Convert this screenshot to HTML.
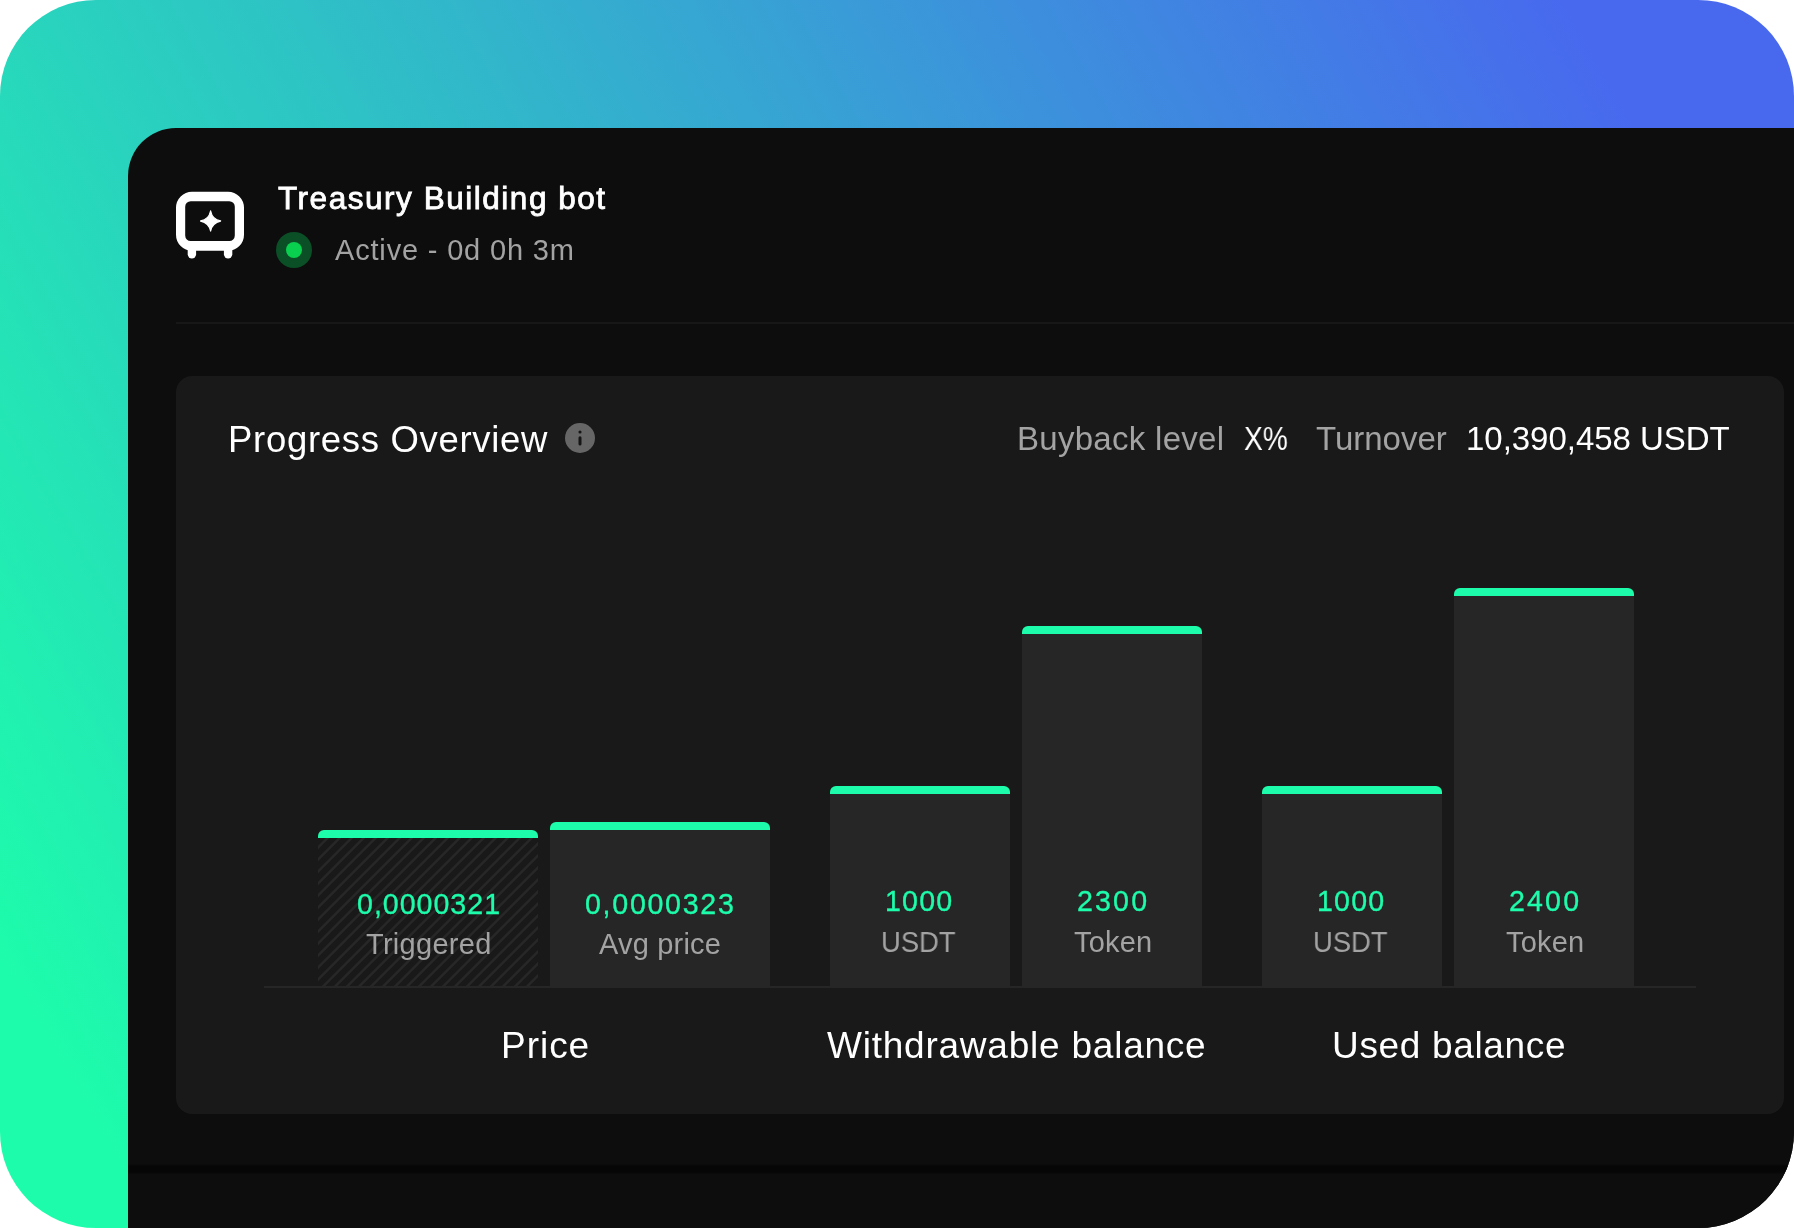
<!DOCTYPE html>
<html lang="en">
<head>
<meta charset="utf-8">
<title>Treasury Building bot</title>
<style>
html,body{margin:0;padding:0;background:#ffffff;}
body{width:1794px;height:1228px;overflow:hidden;position:relative;font-family:"Liberation Sans",sans-serif;}
.bg{position:absolute;left:0;top:0;width:1794px;height:1228px;border-radius:96px;overflow:hidden;
  background:linear-gradient(#0d0d0d,#0d0d0d) 128px 180px/1666px 1048px no-repeat,linear-gradient(#0d0d0d,#0d0d0d) 180px 128px/1614px 1100px no-repeat,linear-gradient(60.3deg,#1dfcab 6.1%,#4869ee 90.8%);}
.panel{position:absolute;left:128px;top:128px;width:1666px;height:1100px;background:#0d0d0d;border-top-left-radius:48px;overflow:hidden;}
.abs{position:absolute;}
.t{position:absolute;white-space:nowrap;line-height:1;will-change:transform;font-family:"Liberation Sans",sans-serif;}
.divider{left:176px;top:322px;width:1618px;height:2px;background:#171717;}
.card{left:176px;top:376px;width:1608px;height:738px;border-radius:16px;background:#191919;}
.axis{left:264px;top:986px;width:1432px;height:2px;background:#262626;}
.bar{position:absolute;background:#262626;}
.cap{position:absolute;height:8px;background:#1dfcab;border-radius:6px 6px 0 0;}
.hatch{background:repeating-linear-gradient(135deg,#191919 0px,#191919 5.1px,#272727 6.0px,#272727 7.6px,#191919 8.485px);}
.band{left:128px;top:1164px;width:1666px;height:11px;background:linear-gradient(to bottom,#0d0d0d 0px,#060606 2.2px,#060606 8px,#0d0d0d 10.7px);}
.dot-o{left:276px;top:232px;width:36px;height:36px;border-radius:50%;background:#0b4f27;}
.dot-i{left:286px;top:242px;width:16px;height:16px;border-radius:50%;background:#09d04f;}
</style>
</head>
<body>
<div class="bg">
  <div class="panel"></div>
  <div class="abs band"></div>
  <div class="abs divider"></div>
  <div class="abs card"></div>

  <!-- bot icon -->
  <svg class="abs" style="left:170px;top:186px" width="80" height="80" viewBox="170 186 80 80">
    <path fill="#ffffff" fill-rule="evenodd" d="M192 191.7 H228 A16 16 0 0 1 244 207.7 V234.8 A16 16 0 0 1 228 250.8 H192 A16 16 0 0 1 176 234.8 V207.7 A16 16 0 0 1 192 191.7 Z M190.7 201.2 A5.5 5.5 0 0 0 185.2 206.7 V235.5 A5.5 5.5 0 0 0 190.7 241 H229.3 A5.5 5.5 0 0 0 234.8 235.5 V206.7 A5.5 5.5 0 0 0 229.3 201.2 Z"/>
    <rect x="187.7" y="244" width="8.4" height="14.5" rx="4.2" fill="#ffffff"/>
    <rect x="223.9" y="244" width="8.4" height="14.5" rx="4.2" fill="#ffffff"/>
    <path d="M210.6 211 Q212.2 219.4 220.6 221 Q212.2 222.6 210.6 231 Q209 222.6 200.6 221 Q209 219.4 210.6 211 Z" fill="#ffffff" stroke="#ffffff" stroke-width="1.3" stroke-linejoin="round"/>
  </svg>

  <div class="abs dot-o"></div>
  <div class="abs dot-i"></div>

  <!-- info icon -->
  <svg class="abs" style="left:565px;top:423px" width="30" height="30" viewBox="0 0 30 30">
    <circle cx="15" cy="15" r="15" fill="#666666"/>
    <circle cx="15" cy="9" r="1.55" fill="#151515"/>
    <rect x="13.5" y="13.2" width="3" height="9.4" rx="1.5" fill="#151515"/>
  </svg>

  <!-- bars -->
  <div class="bar hatch" style="left:318px;top:838px;width:220px;height:148px"></div>
  <div class="cap" style="left:318px;top:830px;width:220px"></div>

  <div class="bar" style="left:550px;top:830px;width:220px;height:156px"></div>
  <div class="cap" style="left:550px;top:822px;width:220px"></div>

  <div class="bar" style="left:830px;top:794px;width:180px;height:192px"></div>
  <div class="cap" style="left:830px;top:786px;width:180px"></div>

  <div class="bar" style="left:1022px;top:634px;width:180px;height:352px"></div>
  <div class="cap" style="left:1022px;top:626px;width:180px"></div>

  <div class="bar" style="left:1262px;top:794px;width:180px;height:192px"></div>
  <div class="cap" style="left:1262px;top:786px;width:180px"></div>

  <div class="bar" style="left:1454px;top:596px;width:180px;height:390px"></div>
  <div class="cap" style="left:1454px;top:588px;width:180px"></div>

  <div class="abs axis"></div>

<span class="t" style="left:277.58px;top:183px;font-size:31.5px;color:#ffffff;letter-spacing:1.531px;-webkit-text-stroke:0.85px #ffffff;">Treasury Building bot</span>
<span class="t" style="left:335.30px;top:236px;font-size:29px;color:#a3a3a3;letter-spacing:0.825px;">Active - 0d 0h 3m</span>
<span class="t" style="left:227.50px;top:422px;font-size:36.5px;color:#ffffff;letter-spacing:0.697px;">Progress Overview</span>
<span class="t" style="left:1016.70px;top:422px;font-size:33px;color:#a3a3a3;letter-spacing:0.285px;">Buyback level</span>
<span class="t" style="left:1244.10px;top:422px;font-size:33px;color:#ffffff;transform:scaleX(0.8528);transform-origin:0 0;">X%</span>
<span class="t" style="left:1315.90px;top:422px;font-size:33px;color:#a3a3a3;letter-spacing:-0.005px;">Turnover</span>
<span class="t" style="left:1465.90px;top:422px;font-size:33px;color:#ffffff;letter-spacing:-0.029px;">10,390,458 USDT</span>
<span class="t" style="left:357.18px;top:890px;font-size:28.6px;color:#1dfcab;letter-spacing:0.985px;-webkit-text-stroke:0.35px #1dfcab;">0,0000321</span>
<span class="t" style="left:366.30px;top:930px;font-size:29px;color:#a3a3a3;letter-spacing:0.286px;">Triggered</span>
<span class="t" style="left:585.48px;top:890px;font-size:28.6px;color:#1dfcab;letter-spacing:1.710px;-webkit-text-stroke:0.35px #1dfcab;">0,0000323</span>
<span class="t" style="left:599.10px;top:930px;font-size:29px;color:#a3a3a3;letter-spacing:0.196px;">Avg price</span>
<span class="t" style="left:884.88px;top:887px;font-size:28.6px;color:#1dfcab;letter-spacing:1.178px;-webkit-text-stroke:0.35px #1dfcab;">1000</span>
<span class="t" style="left:881.21px;top:928px;font-size:29px;color:#a3a3a3;transform:scaleX(0.9440);transform-origin:0 0;">USDT</span>
<span class="t" style="left:1077.18px;top:887px;font-size:28.6px;color:#1dfcab;letter-spacing:2.144px;-webkit-text-stroke:0.35px #1dfcab;">2300</span>
<span class="t" style="left:1073.50px;top:928px;font-size:29px;color:#a3a3a3;letter-spacing:0.186px;">Token</span>
<span class="t" style="left:1316.88px;top:887px;font-size:28.6px;color:#1dfcab;letter-spacing:1.178px;-webkit-text-stroke:0.35px #1dfcab;">1000</span>
<span class="t" style="left:1313.21px;top:928px;font-size:29px;color:#a3a3a3;transform:scaleX(0.9440);transform-origin:0 0;">USDT</span>
<span class="t" style="left:1509.18px;top:887px;font-size:28.6px;color:#1dfcab;letter-spacing:2.144px;-webkit-text-stroke:0.35px #1dfcab;">2400</span>
<span class="t" style="left:1505.50px;top:928px;font-size:29px;color:#a3a3a3;letter-spacing:0.186px;">Token</span>
<span class="t" style="left:500.50px;top:1027px;font-size:37px;color:#ffffff;letter-spacing:0.970px;">Price</span>
<span class="t" style="left:827.30px;top:1027px;font-size:37px;color:#ffffff;letter-spacing:0.771px;">Withdrawable balance</span>
<span class="t" style="left:1332.20px;top:1027px;font-size:37px;color:#ffffff;letter-spacing:0.665px;">Used balance</span>
</div>
</body>
</html>
